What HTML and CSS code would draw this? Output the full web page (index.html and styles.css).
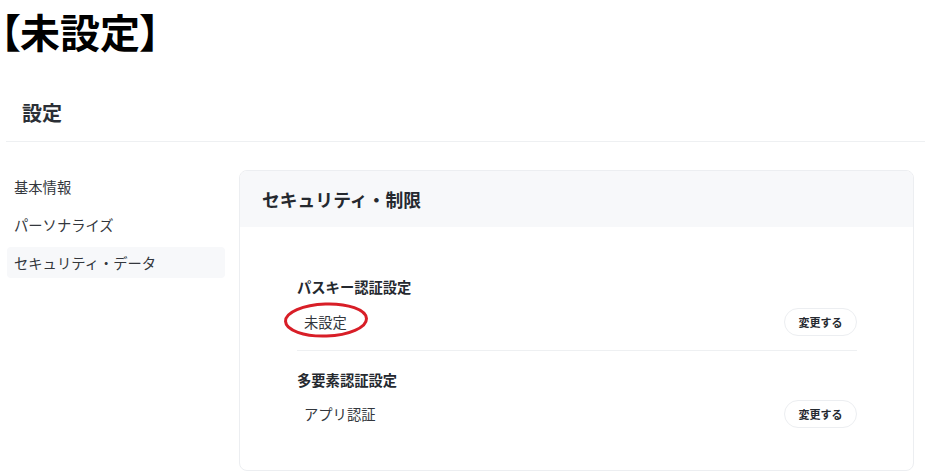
FILE: index.html
```html
<!DOCTYPE html>
<html lang="ja">
<head>
<meta charset="utf-8">
<title>設定</title>
<link rel="stylesheet" href="styles.css">
</head>
<body>
<h1 class="note">【未設定】</h1>
<div class="page">
  <header class="page-head"><h2 class="page-title">設定</h2></header>
  <div class="page-body">
    <nav class="side">
      <a class="side-item">基本情報</a>
      <a class="side-item">パーソナライズ</a>
      <a class="side-item is-active">セキュリティ・データ</a>
    </nav>
    <section class="card">
      <div class="card-head">セキュリティ・制限</div>
      <div class="card-body">
        <div class="setting">
          <h3 class="setting-title">パスキー認証設定</h3>
          <div class="setting-row">
            <span class="setting-value circled">未設定<svg class="ring" viewBox="0 0 86 38" aria-hidden="true"><ellipse cx="43" cy="19" rx="40.5" ry="16" fill="none" stroke="#d81e27" stroke-width="3" transform="rotate(-2 43 19)"/></svg></span>
            <button class="btn">変更する</button>
          </div>
        </div>
        <div class="divider"></div>
        <div class="setting">
          <h3 class="setting-title">多要素認証設定</h3>
          <div class="setting-row">
            <span class="setting-value">アプリ認証</span>
            <button class="btn">変更する</button>
          </div>
        </div>
      </div>
    </section>
  </div>
</div>
</body>
</html>
```

FILE: styles.css
```css
* { box-sizing: border-box; }
html, body { margin: 0; padding: 0; background: #fff; }
body {
  font-family: "Noto Sans CJK JP", "Noto Sans", sans-serif;
  color: #2b2f36;
}
.note {
  margin: 0;
  font-size: 40px;
  line-height: 62px;
  font-weight: 700;
  color: #000;
  font-feature-settings: "palt";
  letter-spacing: 0;
}
.page-head {
  margin-left: 6px;
  padding: 34px 0 11px 16px;
  border-bottom: 1px solid #eef0f2;
}
.page-title {
  margin: 0;
  font-size: 20px;
  line-height: 34px;
  font-weight: 700;
  color: #2b2f36;
}
.page-body {
  display: flex;
  align-items: flex-start;
  gap: 14px;
  margin-top: 28px;
  padding-left: 7px;
}
.side {
  width: 218px;
  display: flex;
  flex-direction: column;
  gap: 7px;
  padding-top: 1px;
}
.side-item {
  display: block;
  height: 31px;
  line-height: 31px;
  padding-left: 7px;
  font-size: 14.3px;
  color: #33373d;
  border-radius: 4px;
}
.side-item.is-active { background: #f7f8fa; }
.card {
  width: 675px;
  border: 1px solid #eceef1;
  border-radius: 8px;
  overflow: hidden;
}
.card-head {
  height: 56px;
  line-height: 56px;
  padding-left: 22px;
  background: #f7f8fa;
  font-size: 17.8px;
  font-weight: 700;
  color: #25292f;
}
.card-body {
  padding: 50px 56px 42px 57px;
}
.setting-title {
  margin: 0;
  font-size: 14.3px;
  line-height: 20px;
  font-weight: 700;
  color: #25292f;
}
.setting-row {
  display: flex;
  align-items: center;
  justify-content: space-between;
  margin-top: 11px;
  height: 28px;
}
.setting + .divider + .setting .setting-row { margin-top: 10px; }
.setting-value {
  padding-left: 7px;
  font-size: 14.3px;
  color: #33373d;
  line-height: 20px;
}
.circled { position: relative; }
.ring {
  position: absolute;
  left: -14px;
  top: -11px;
  width: 86px;
  height: 38px;
}
.btn {
  width: 73px;
  height: 28px;
  border: 1px solid #eceef1;
  border-radius: 14px;
  background: #fff;
  font-family: inherit;
  font-size: 11px;
  font-weight: 700;
  color: #25292f;
  padding: 0;
}
.divider {
  height: 1px;
  background: #eef0f2;
  margin: 14px 0 19px;
}
```
